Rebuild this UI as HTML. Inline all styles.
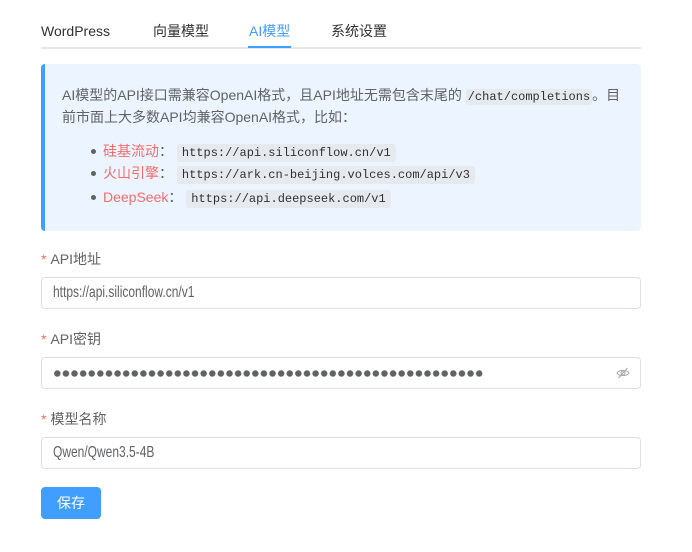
<!DOCTYPE html>
<html><head><meta charset="utf-8"><style>
*{box-sizing:border-box;margin:0;padding:0}
body{width:692px;height:552px;background:#fff;font-family:"Liberation Sans","Noto Sans CJK SC",sans-serif;color:#303133;position:relative;overflow:hidden}
.tabs{position:absolute;left:41px;top:0;width:600px;height:49px;border-bottom:2px solid #e4e7ed}
.tab{position:absolute;top:21px;font-size:14px;line-height:20px;color:#303133}
.act{color:#409eff}
.bar{position:absolute;left:248px;top:46px;width:43px;height:2px;background:#409eff}
.alert{position:absolute;left:41px;top:64px;width:600px;height:167px;background:#ecf5ff;border-left:4px solid #409eff;border-radius:4px;font-size:14px;color:#606266}
.alert p{position:absolute;left:17px;top:22px;width:570px;line-height:19.5px}
code{font-family:"Liberation Mono",monospace;font-size:12px;background:#e6e9ee;border-radius:3px;padding:2px 5px;color:#303133}
.li{position:absolute;left:58px;font-size:14px;line-height:18px;white-space:nowrap}
.li b{font-weight:normal;color:#f56c6c}
.li:before{content:"";position:absolute;left:-12px;top:7px;width:5px;height:5px;border-radius:50%;background:#606266}
.lab{position:absolute;left:41px;font-size:14px;color:#606266}
.lab i{color:#f56c6c;font-style:normal;margin-right:4px}
.inp{position:absolute;left:41px;width:600px;height:32px;border:1px solid #dcdfe6;border-radius:4px;font-size:16px;line-height:30px;padding-left:11px;color:#606266}
.inp span{display:inline-block;transform:scaleX(0.75);transform-origin:0 50%}
.dots{position:absolute;left:11px;top:12px;width:431px;height:7px;background:radial-gradient(circle,#606266 3px,transparent 3.4px) 0 0/8.62px 7px repeat-x}
.btn{position:absolute;left:41px;top:487px;width:60px;height:32px;background:#409eff;border-radius:4px;color:#fff;font-size:14px;line-height:32px;text-align:center}
</style></head><body>
<div class="tabs">
<span class="tab" style="left:0">WordPress</span>
<span class="tab" style="left:112px">向量模型</span>
<span class="tab act" style="left:208px">AI模型</span>
<span class="tab" style="left:290px">系统设置</span>
</div>
<div class="bar"></div>
<div class="alert">
<p>AI模型的API接口需兼容OpenAI格式，且API地址无需包含末尾的 <code style="padding:1px 2px">/chat/completions</code>。目前市面上大多数API均兼容OpenAI格式，比如：</p>
<div class="li" style="top:78px"><b>硅基流动</b>： <code>https://api.siliconflow.cn/v1</code></div>
<div class="li" style="top:100px"><b>火山引擎</b>： <code>https://ark.cn-beijing.volces.com/api/v3</code></div>
<div class="li" style="top:124px"><b>DeepSeek</b>： <code>https://api.deepseek.com/v1</code></div>
</div>
<div class="lab" style="top:249px"><i>*</i>API地址</div>
<div class="inp" style="top:277px"><span>https://api.siliconflow.cn/v1</span></div>
<div class="lab" style="top:329px"><i>*</i>API密钥</div>
<div class="inp" style="top:357px"><div class="dots"></div>
<svg style="position:absolute;right:10px;top:8px" width="14" height="14" viewBox="0 0 14 14" fill="none" stroke="#a8abb2" stroke-width="1.1"><path d="M1 7c2-3.5 10-3.5 12 0c-2 3.5-10 3.5-12 0z"/><circle cx="7" cy="7" r="2"/><path d="M2.5 12L11.5 2"/></svg></div>
<div class="lab" style="top:409px"><i>*</i>模型名称</div>
<div class="inp" style="top:437px"><span>Qwen/Qwen3.5-4B</span></div>
<div class="btn">保存</div>
</body></html>
